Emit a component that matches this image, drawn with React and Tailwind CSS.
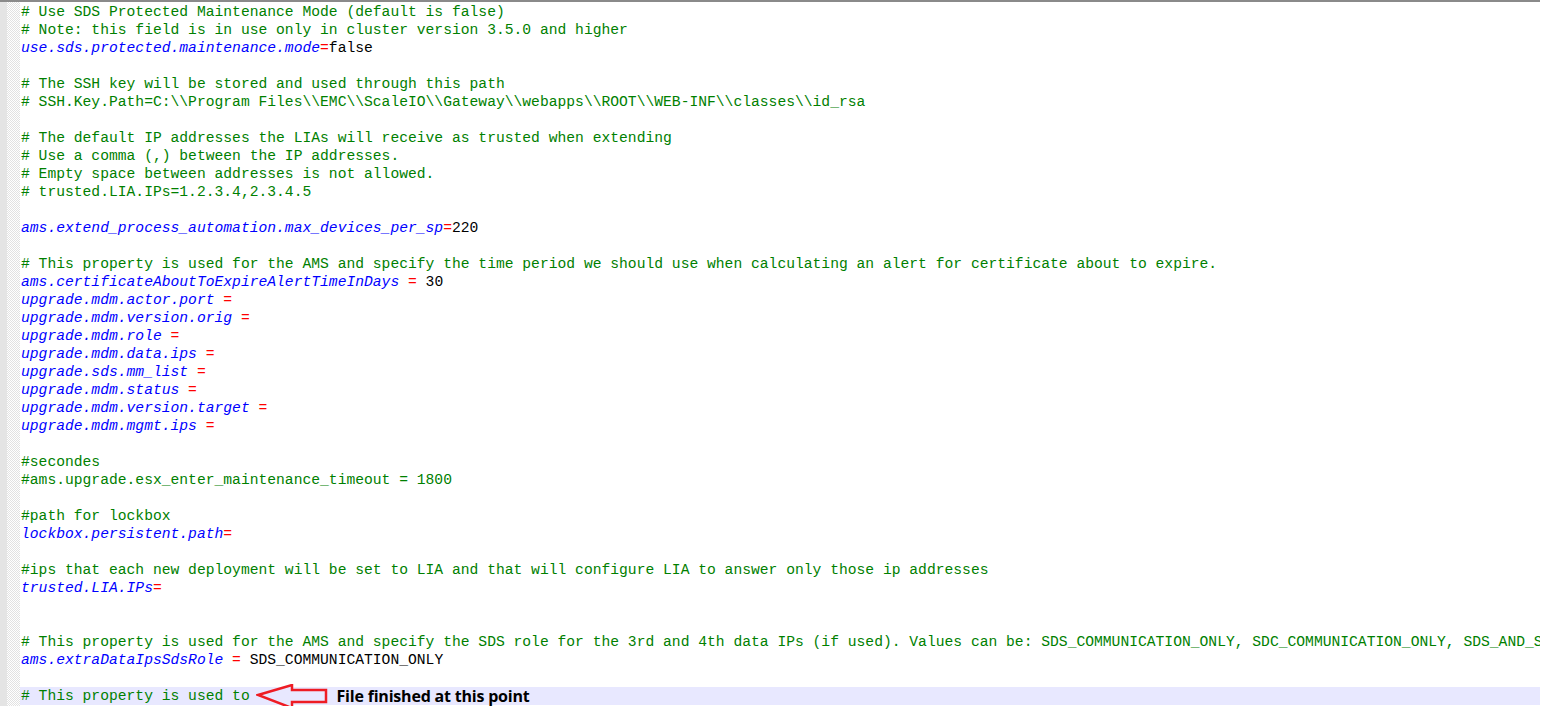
const lines = [
  { c: '# Use SDS Protected Maintenance Mode (default is false)' },
  { c: '# Note: this field is in use only in cluster version 3.5.0 and higher' },
  { k: 'use.sds.protected.maintenance.mode', e: '=', v: 'false' },
  {},
  { c: '# The SSH key will be stored and used through this path' },
  { c: '# SSH.Key.Path=C:\\\\Program Files\\\\EMC\\\\ScaleIO\\\\Gateway\\\\webapps\\\\ROOT\\\\WEB-INF\\\\classes\\\\id_rsa' },
  {},
  { c: '# The default IP addresses the LIAs will receive as trusted when extending' },
  { c: '# Use a comma (,) between the IP addresses.' },
  { c: '# Empty space between addresses is not allowed.' },
  { c: '# trusted.LIA.IPs=1.2.3.4,2.3.4.5' },
  {},
  { k: 'ams.extend_process_automation.max_devices_per_sp', e: '=', v: '220' },
  {},
  { c: '# This property is used for the AMS and specify the time period we should use when calculating an alert for certificate about to expire.' },
  { k: 'ams.certificateAboutToExpireAlertTimeInDays ', e: '=', v: ' 30' },
  { k: 'upgrade.mdm.actor.port ', e: '=' },
  { k: 'upgrade.mdm.version.orig ', e: '=' },
  { k: 'upgrade.mdm.role ', e: '=' },
  { k: 'upgrade.mdm.data.ips ', e: '=' },
  { k: 'upgrade.sds.mm_list ', e: '=' },
  { k: 'upgrade.mdm.status ', e: '=' },
  { k: 'upgrade.mdm.version.target ', e: '=' },
  { k: 'upgrade.mdm.mgmt.ips ', e: '=' },
  {},
  { c: '#secondes' },
  { c: '#ams.upgrade.esx_enter_maintenance_timeout = 1800' },
  {},
  { c: '#path for lockbox' },
  { k: 'lockbox.persistent.path', e: '=' },
  {},
  { c: '#ips that each new deployment will be set to LIA and that will configure LIA to answer only those ip addresses' },
  { k: 'trusted.LIA.IPs', e: '=' },
  {},
  {},
  { c: '# This property is used for the AMS and specify the SDS role for the 3rd and 4th data IPs (if used). Values can be: SDS_COMMUNICATION_ONLY, SDC_COMMUNICATION_ONLY, SDS_AND_S' },
  { k: 'ams.extraDataIpsSdsRole ', e: '=', v: ' SDS_COMMUNICATION_ONLY' },
  {},
  { c: '# This property is used to ', current: true },
];

function Line({ line }) {
  return (
    <div className={`h-[18px] pl-[1px] whitespace-pre ${line.current ? 'bg-[#e8e8ff]' : ''}`}>
      {line.c && <span className="text-[#008000]">{line.c}</span>}
      {line.k && <span className="italic text-[#0000ff]">{line.k}</span>}
      {line.e && <span className="text-[#ff0000]">{line.e}</span>}
      {line.v && <span className="text-black">{line.v}</span>}
      {line.current && (
        <span className="inline-flex items-center align-top h-[18px] relative">
          <svg width="74" height="26" viewBox="0 0 74 26" className="absolute left-[-2px] top-[-3px]">
            <path d="M2 11 L36 1 L36 6 L70 6 L70 18 L36 18 L36 24 Z" fill="none" stroke="#ee1c24" strokeWidth="2.5" strokeLinejoin="miter" />
          </svg>
          <span className="ml-[78px] font-bold text-[16px] leading-[18px] text-black tracking-[-0.2px]" style={{ fontFamily: '"Open Sans", "Liberation Sans", sans-serif' }}>
            File finished at this point
          </span>
        </span>
      )}
    </div>
  );
}

export default function App() {
  return (
    <div className="w-[1545px] h-[706px] bg-white overflow-hidden">
      <div className="w-[1540px] h-[706px] flex border-t-2 border-[#8a8a8a] overflow-hidden">
        <div className="w-[7px] shrink-0 bg-[#e4e4e4]" />
        <div className="w-[13px] shrink-0 bg-[repeating-conic-gradient(#e2e2e2_0%_25%,#ffffff_0%_50%)] bg-[length:2px_2px]" />
        <div
          className="flex-1 min-w-0 overflow-hidden pt-[1px] text-[14.67px] leading-[18px]"
          style={{ fontFamily: '"Liberation Mono", "Courier New", monospace' }}
        >
          {lines.map((line, i) => (
            <Line key={i} line={line} />
          ))}
        </div>
      </div>
    </div>
  );
}
